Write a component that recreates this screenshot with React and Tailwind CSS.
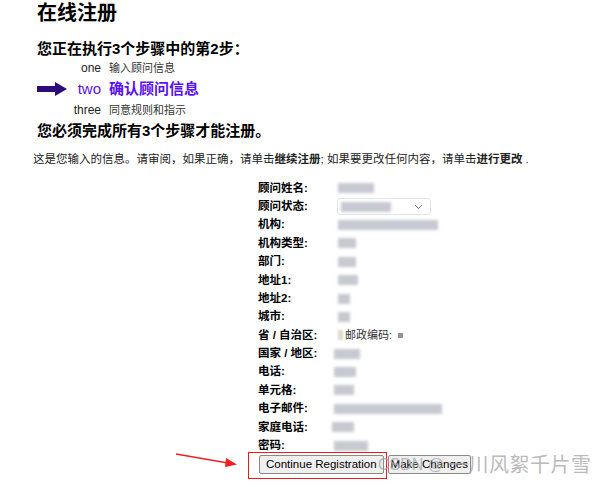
import React from 'react';

const rows = [
  { label: '顾问姓名:', w: 36, off: 0 },
  { label: '顾问状态:', select: true },
  { label: '机构:', w: 100, off: 0 },
  { label: '机构类型:', w: 18, off: 0 },
  { label: '部门:', w: 18, off: 0 },
  { label: '地址1:', w: 20, off: 0 },
  { label: '地址2:', w: 12, off: 0 },
  { label: '城市:', w: 12, off: 0 },
  { label: '省 / 自治区:', zip: true },
  { label: '国家 / 地区:', w: 26, off: -4 },
  { label: '电话:', w: 22, off: -4 },
  { label: '单元格:', w: 20, off: -4 },
  { label: '电子邮件:', w: 108, off: -4 },
  { label: '家庭电话:', w: 22, off: -6 },
  { label: '密码:', w: 34, off: -4 },
];

function Blur({ w, off = 0 }) {
  return (
    <div
      className="h-[10px] bg-[#b8bcc4] blur-[1.5px] opacity-80"
      style={{ width: w, marginLeft: off }}
    />
  );
}

export default function App() {
  return (
    <div className="relative w-[604px] h-[487px] overflow-hidden bg-white text-black font-['Liberation_Sans','Noto_Sans_CJK_SC',sans-serif]">
      <div className="pl-[37px] pt-[1px]">
        <h1 className="text-[20px] font-bold leading-[24px]">在线注册</h1>
        <h2 className="mt-[14px] text-[15px] font-bold leading-[20px]">您正在执行3个步骤中的第2步：</h2>

        <div className="-mt-[1px] flex flex-col">
          <div className="flex items-center h-[20px]">
            <span className="w-[64px] text-right text-[12px] text-[#222]">one</span>
            <span className="ml-[8px] text-[11px] text-[#333]">输入顾问信息</span>
          </div>
          <div className="flex items-center h-[22px]">
            <svg width="30" height="14" viewBox="0 0 30 14" className="shrink-0">
              <rect x="0" y="4" width="19" height="6" fill="#2d0b7a" />
              <polygon points="18,0 30,7 18,14" fill="#2d0b7a" />
            </svg>
            <span className="ml-[9px] w-[25px] text-right text-[15px] text-[#5a10ff]">two</span>
            <span className="ml-[8px] text-[15px] font-bold text-[#5a10ff]">确认顾问信息</span>
          </div>
          <div className="flex items-center h-[20px]">
            <span className="w-[64px] text-right text-[12px] text-[#222]">three</span>
            <span className="ml-[8px] text-[11px] text-[#333]">同意规则和指示</span>
          </div>
        </div>

        <h2 className="mt-[1px] text-[15px] font-bold leading-[20px]">您必须完成所有3个步骤才能注册。</h2>
      </div>

      <p className="mt-[10px] pl-[33px] text-[11.5px] text-[#222] leading-[16px] whitespace-nowrap">
        这是您输入的信息。请审阅，如果正确，请单击<b>继续注册</b>; 如果要更改任何内容，请单击<b>进行更改</b> .
      </p>

      <div className="mt-[12px] ml-[258px] flex flex-col">
        {rows.map((r) => (
          <div key={r.label} className="flex items-center h-[18.4px]">
            <span className="w-[80px] shrink-0 text-[11.5px] font-bold whitespace-nowrap">{r.label}</span>
            {r.select ? (
              <div className="-ml-[1px] flex items-center justify-between w-[94px] h-[17px] border border-[#e4e4e4] rounded-[3px] px-[3px]">
                <Blur w={50} />
                <svg width="9" height="6" viewBox="0 0 9 6" className="mr-[4px]">
                  <path d="M1 1l3.5 3.5L8 1" fill="none" stroke="#777" strokeWidth="1" />
                </svg>
              </div>
            ) : r.zip ? (
              <div className="flex items-center">
                <div className="w-[5px] h-[10px] bg-[#e2d8cc] blur-[1px]" />
                <span className="ml-[2px] text-[11px] text-[#333]">邮政编码:</span>
                <div className="ml-[6px] w-[5px] h-[5px] bg-[#9a8e94]" />
              </div>
            ) : (
              <Blur w={r.w} off={r.off} />
            )}
          </div>
        ))}
      </div>

      <div className="ml-[259px] mt-[0px] flex items-center gap-[4px]">
        <button className="h-[19px] px-[6px] border border-[#8a8a8a] rounded-[2px] bg-[#efefef] text-[11.5px] leading-none text-black">
          Continue Registration
        </button>
        <button className="h-[19px] px-[2px] border border-[#8a8a8a] rounded-[2px] bg-[#efefef] text-[11.5px] leading-none text-black whitespace-nowrap">
          Make Changes
        </button>
      </div>

      {/* annotation */}
      <div className="absolute left-[248px] top-[452px] w-[139px] h-[27px] border border-[#f01818]" />
      <svg className="absolute left-[174px] top-[451px]" width="66" height="18" viewBox="0 0 66 18">
        <line x1="2" y1="3" x2="54" y2="12" stroke="#f02020" strokeWidth="1.5" />
        <polygon points="52,7 63,13.5 51,16" fill="#f02020" />
      </svg>

      {/* watermark */}
      <div className="absolute left-[378px] top-[453px] flex items-center whitespace-nowrap text-[#a8a8a8]/80">
        <span className="text-[16px] leading-[24px]">CSDN @</span>
        <span className="ml-[4px] text-[20px] leading-[24px] tracking-[0.5px]">一川风絮千片雪</span>
      </div>
    </div>
  );
}
